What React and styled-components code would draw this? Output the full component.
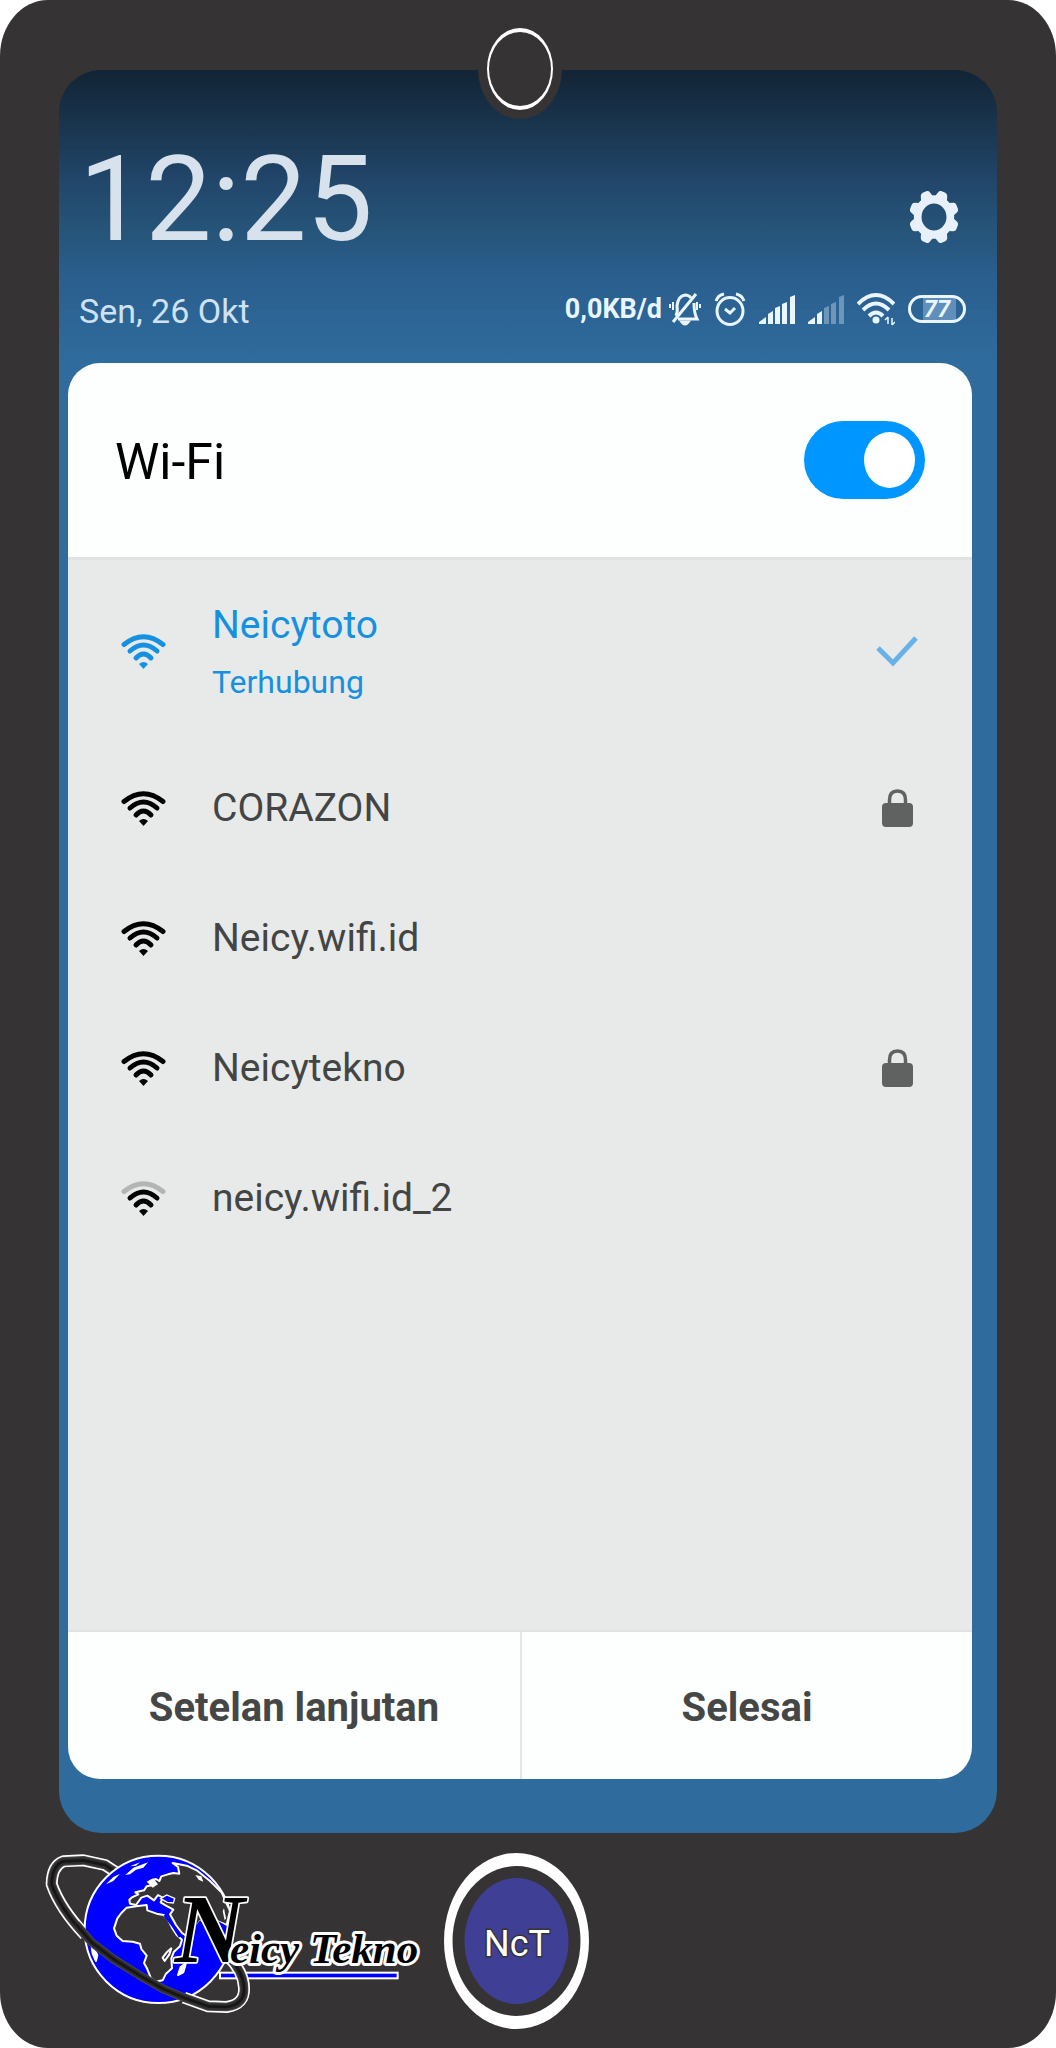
import React, { useState } from 'react';
import styled, { createGlobalStyle } from 'styled-components';

const GlobalStyle = createGlobalStyle`
  * {
    box-sizing: border-box;
  }
  body {
    margin: 0;
    background-color: #fff;
    font-family: Roboto, 'Liberation Sans', sans-serif;
  }
`;
const Device = styled.main`
  display: flex;
  flex-direction: column;
  min-height: 100vh;
  padding: 70px 59px 0;
  background-color: #363334;
  border-radius: 48px / 56px;
`;
const Screen = styled.div`
  display: flex;
  flex: 1;
  flex-direction: column;
  padding: 0 25px 54px 9px;
  border-radius: 42px;
  background: #2f6b9c
    linear-gradient(
      #122435 0,
      #1a3650 60px,
      #21466a 110px,
      #265479 160px,
      #2a5f8f 210px,
      #2f6b9c 290px
    )
    no-repeat;
`;
const Content = styled.div`
  position: relative;
  display: flex;
  flex: 1;
  flex-direction: column;
`;
const Camera = styled.svg`
  position: absolute;
  top: -51px;
  left: 50%;
  width: 84px;
  height: 100px;
  transform: translateX(-50%);
`;
const StatusArea = styled.header`
  display: flex;
  flex-direction: column;
  justify-content: space-between;
  height: 293px;
  padding: 58px 6px 32px 11px;
`;
const StatusLine = styled.div`
  display: flex;
  align-items: center;
  justify-content: space-between;
`;
const Clock = styled.time`
  font-size: 118px;
  line-height: 144px;
  color: #d7e2ec;
`;
const DateText = styled.time`
  font-size: 34px;
  line-height: 40px;
  color: #cfe2f2;
`;
const IconButton = styled.button`
  display: flex;
  margin: 34px 8px 0 0;
  padding: 0;
  border: 0;
  background: none;
  color: #e8f1fb;
`;
const StatusIcons = styled.div`
  display: flex;
  align-items: center;
  gap: 13px;
  margin-bottom: 4px;
  color: #e9f6ff;
`;
const Speed = styled.span`
  margin-right: -6px;
  font-size: 27px;
  font-weight: 700;
`;
const Battery = styled.span`
  display: flex;
  align-items: center;
  justify-content: center;
  width: 58px;
  height: 28px;
  border: 3px solid #e9f6ff;
  border-radius: 14px;
  background: linear-gradient(90deg, transparent 24%, #5f8fba 24%, #5f8fba 86%, transparent 86%);
  font-size: 24px;
  font-weight: 700;
  font-style: italic;
`;
const Card = styled.section`
  display: flex;
  flex: 1;
  flex-direction: column;
  overflow: hidden;
  border-radius: 32px;
  background-color: #fdfefe;
`;
const CardHeader = styled.label`
  display: flex;
  align-items: center;
  justify-content: space-between;
  height: 194px;
  padding: 0 47px;
`;
const Title = styled.span`
  padding-top: 4px;
  font-size: 50px;
  line-height: 60px;
  color: #000;
`;
const Switch = styled.input`
  appearance: none;
  display: flex;
  align-items: center;
  width: 121px;
  height: 78px;
  margin: 0;
  padding: 0 10px;
  border-radius: 39px;
  background-color: ${({ checked }) => (checked ? '#0096ff' : '#c8c8c8')};
  justify-content: ${({ checked }) => (checked ? 'flex-end' : 'flex-start')};

  &::before {
    content: '';
    width: 51px;
    height: 56px;
    border-radius: 50%;
    background-color: #fff;
  }
`;
const List = styled.ul`
  flex: 1;
  margin: 0;
  padding: 0;
  list-style: none;
  border-top: 3px solid #e0e2e1;
  border-bottom: 2px solid #dfe2e1;
  background-color: #e8eae9;
`;
const Row = styled.li`
  display: flex;
  align-items: center;
  height: ${({ $tall }) => ($tall ? '183px' : '130px')};
  padding: 0 53px;
  color: ${({ $tall }) => ($tall ? '#1591e0' : '#000')};
`;
const Names = styled.div`
  display: flex;
  flex: 1;
  flex-direction: column;
  gap: 13px;
  margin-left: 46px;
`;
const Name = styled.span`
  font-size: 39px;
  line-height: 48px;
  color: ${({ $active }) => ($active ? '#1591e0' : '#434545')};
`;
const State = styled.span`
  font-size: 32px;
  line-height: 40px;
`;
const Mark = styled.span`
  display: flex;
  justify-content: center;
  width: 44px;
`;
const Actions = styled.footer`
  display: grid;
  grid-template-columns: 1fr 1fr;
  height: 147px;
`;
const Action = styled.button`
  border: 0;
  padding: 4px 0 0;
  background: none;
  font-family: inherit;
  font-size: 40px;
  font-weight: 700;
  color: #454747;

  & + & {
    border-left: 2px solid #e4e6e5;
  }
`;
const Chin = styled.div`
  display: flex;
  align-items: center;
  height: 215px;
`;
const Logo = styled.svg`
  width: 384px;
  height: 200px;
  margin-left: -14px;
`;
const LogoText = styled.text`
  font-family: 'Liberation Serif', serif;
  font-style: italic;
  font-weight: 700;
  fill: #000;
  stroke: #fff;
  stroke-linejoin: round;
  paint-order: stroke;
`;
const HomeButton = styled.button`
  display: flex;
  margin-left: 15px;
  padding: 0;
  border: 0;
  background: none;
`;

const networks = [
  { name: 'Neicytoto', state: 'Terhubung', connected: true },
  { name: 'CORAZON', locked: true },
  { name: 'Neicy.wifi.id' },
  { name: 'Neicytekno', locked: true },
  { name: 'neicy.wifi.id_2', weak: true },
];

const gearTeeth = [22.5, 67.5, 112.5, 157.5, 202.5, 247.5, 292.5, 337.5];

function GearIcon() {
  return (
    <svg width="48" height="52" viewBox="-25 -25 50 50" preserveAspectRatio="none" fill="currentColor">
      <circle r="17" fill="none" stroke="currentColor" strokeWidth="8" />
      {gearTeeth.map(angle => (
        <path
          key={angle}
          d="M-7 -18L-5 -24Q-4 -26 -2 -26H2Q4 -26 5 -24L7 -18Z"
          transform={`rotate(${angle})`}
        />
      ))}
    </svg>
  );
}

function MutedIcon() {
  return (
    <svg width="32" height="34" viewBox="0 0 32 34" fill="none" stroke="currentColor" strokeWidth="3">
      <path d="M7 24Q9 20 8 14Q9 4 16 3Q20 3 22 6M25 11Q25 21 28 27H9" />
      <path d="M27 2L4 30" />
      <path d="M13 30Q16 34 19 30Z" fill="currentColor" />
      <path d="M4 10V18M1 12V16M28 10V18M31 12V16" strokeWidth="2" />
    </svg>
  );
}

function AlarmIcon() {
  return (
    <svg width="32" height="34" viewBox="0 0 32 34" fill="none" stroke="currentColor" strokeWidth="3">
      <ellipse cx="16" cy="19" rx="13" ry="13.5" />
      <path d="M2 9Q4 3 10 2M30 9Q28 3 22 2M11 17L16 21L21 16" />
    </svg>
  );
}

function SignalIcon({ level }) {
  const bars = [
    'M0 29V27L7 22V29Z',
    'M9 29V19L14 16V29Z',
    'M16 29V13L21 11V29Z',
    'M23 29V9L28 7V29Z',
    'M31 29V2L36 0V29Z',
  ];
  return (
    <svg width="36" height="29" viewBox="0 0 36 29" fill="currentColor">
      {bars.map((bar, index) => (
        <path key={bar} d={bar} opacity={index < level ? 1 : 0.35} />
      ))}
    </svg>
  );
}

function WifiStatusIcon() {
  return (
    <svg width="38" height="34" viewBox="0 0 38 34" fill="none" stroke="currentColor" strokeWidth="4">
      <path d="M1 12Q19 -6 37 12M6 18Q19 5 32 18M12 24Q19 17 26 24" />
      <circle cx="19" cy="28" r="3.5" fill="currentColor" stroke="none" />
      <path d="M31 25V32M31 25L28 28M35 26V33M35 33L38 30" strokeWidth="1.5" />
    </svg>
  );
}

function WifiIcon({ weak }) {
  return (
    <svg
      width="45"
      height="35"
      viewBox="0 0 45 35"
      fill="none"
      stroke="currentColor"
      strokeWidth="5"
      strokeLinecap="round"
    >
      <path d="M3 10.5Q22.5 -5 42 10.5" stroke={weak ? '#b3b5b4' : 'currentColor'} />
      <path d="M9 17Q22.5 5 36 17M15 24Q22.5 16 30 24" />
      <path d="M18 30Q22.5 26 27 30L22.5 35Z" fill="currentColor" stroke="none" />
    </svg>
  );
}

function CheckIcon() {
  return (
    <svg width="42" height="34" viewBox="0 0 42 34" fill="none" stroke="#68b2ea" strokeWidth="5">
      <path d="M2 13L17 28L40 3" />
    </svg>
  );
}

function LockIcon() {
  return (
    <svg width="31" height="38" viewBox="0 0 31 38">
      <path d="M7.5 17V11Q7.5 2 15.5 2T23.5 11V17" fill="none" stroke="#606161" strokeWidth="3.5" />
      <rect y="14" width="31" height="24" rx="4" fill="#606161" />
    </svg>
  );
}

function Orbit({ d, halo }) {
  return (
    <g fill="none" strokeLinejoin="round">
      <path d={halo} stroke="#fff" strokeWidth="36" />
      <path d={d} stroke="#4a4849" strokeWidth="26" />
      <path d={d} stroke="#2f2d2e" strokeWidth="20" />
      <path d={d} stroke="#161616" strokeWidth="8" />
    </g>
  );
}

function BrandLogo() {
  return (
    <Logo viewBox="45 30 1152 600" role="img" aria-label="Neicy Tekno">
      <defs>
        <clipPath id="globe">
          <circle cx="385" cy="295" r="220" />
        </clipPath>
      </defs>
      {/* far side of the orbit */}
      <Orbit
        d="M260 125L225 102L160 88L100 91Q66 104 65 160Q90 232 165 312"
        halo="M260 125L225 102L160 88L100 91Q66 104 65 160Q90 232 165 312"
      />
      <circle cx="385" cy="295" r="221" fill="#0000fe" stroke="#fff" strokeWidth="6" />
      <g clipPath="url(#globe)" fill="#363334" stroke="#fff" strokeWidth="6" strokeLinejoin="round">
        <path d="M262 262L274 246L290 230L318 226L350 222L352 238L380 248L401 252L412 262L426 290L440 312L456 326L450 346L432 362L424 382L426 412L408 428L398 448L376 452L362 440L350 410L342 396L350 374L334 354L330 338L308 332L278 330L260 314L252 292Z" />
        <path d="M298 206L306 199L325 190L316 184L342 178L350 166L370 162L360 150L378 144L388 150L394 136L414 130L430 126L448 128L444 108L428 96L470 104L500 118L540 150L575 185L600 240L590 282L560 270L535 290L510 270L492 298L474 318L456 306L438 282L420 250L430 236L408 224L392 214L398 200L384 192L372 208L352 194L334 200L318 222L300 218Z" />
        <path d="M398 380L410 364L424 352L418 370L404 390Z" />
        <path d="M444 432L452 408L468 396L460 424Z" fill="#fff" />
        <path d="M184 340L202 372L198 390L188 368Z" fill="#fff" />
        {/* ocean east of Africa */}
        <path d="M484 300L510 268L535 290L560 268L600 290L600 400L470 400Z" fill="#0000fe" stroke="none" />
      </g>
      <g fill="#fff">
        <path d="M286 132L310 110L354 94L340 110L318 116L300 130Z" />
        <path d="M228 160L250 138L270 128L250 150Z" />
        <path d="M300 106L330 94L318 104Z" />
        <path d="M350 152L370 142L384 160L368 170Z" />
        <path d="M496 132L514 136L520 152L506 146Z" />
        <path d="M582 232L588 262L584 268L578 240Z" />
      </g>
      <path
        d="M392 203L410 192L434 202L430 216L412 214Z"
        fill="#0000fe"
        stroke="#fff"
        strokeWidth="4"
      />
      <path d="M404 252L430 286L450 318" fill="none" stroke="#0000fe" strokeWidth="8" />
      <rect x="570" y="425" width="533" height="17" fill="#0000fe" stroke="#fff" strokeWidth="6" />
      {/* near side of the orbit */}
      <Orbit
        d="M138 280L185 334L250 384L330 434L400 474L462 500L535 526L590 528Q645 520 642 470Q640 420 592 374"
        halo="M462 500L535 526L590 528Q645 520 642 470Q640 420 592 374"
      />
      <LogoText x="434" y="392" fontSize="290" strokeWidth="10">N</LogoText>
      <LogoText x="600" y="396" fontSize="129" strokeWidth="18">eicy Tekno</LogoText>
    </Logo>
  );
}

function App() {
  const [wifiOn, setWifiOn] = useState(true);

  return (
    <>
      <GlobalStyle />
      <Device>
        <Screen>
          <Content>
            <Camera viewBox="0 0 84 100" aria-hidden="true">
              <ellipse cx="42" cy="50" rx="42" ry="50" fill="#363334" />
              <ellipse cx="42" cy="50" rx="33" ry="41" fill="#fff" />
              <ellipse cx="42" cy="50" rx="31" ry="37" fill="#363334" />
            </Camera>
            <StatusArea>
              <StatusLine>
                <Clock>12:25</Clock>
                <IconButton type="button" aria-label="Setelan">
                  <GearIcon />
                </IconButton>
              </StatusLine>
              <StatusLine>
                <DateText>Sen, 26 Okt</DateText>
                <StatusIcons>
                  <Speed>0,0KB/d</Speed>
                  <MutedIcon />
                  <AlarmIcon />
                  <SignalIcon level={5} />
                  <SignalIcon level={2} />
                  <WifiStatusIcon />
                  <Battery>77</Battery>
                </StatusIcons>
              </StatusLine>
            </StatusArea>
            <Card>
              <CardHeader>
                <Title>Wi-Fi</Title>
                <Switch
                  type="checkbox"
                  role="switch"
                  checked={wifiOn}
                  onChange={event => setWifiOn(event.target.checked)}
                />
              </CardHeader>
              <List>
                {networks.map(({ name, state, connected, locked, weak }) => (
                  <Row key={name} $tall={connected}>
                    <WifiIcon weak={weak} />
                    <Names>
                      <Name $active={connected}>{name}</Name>
                      {state && <State>{state}</State>}
                    </Names>
                    <Mark>
                      {connected && <CheckIcon />}
                      {locked && <LockIcon />}
                    </Mark>
                  </Row>
                ))}
              </List>
              <Actions>
                <Action type="button">Setelan lanjutan</Action>
                <Action type="button">Selesai</Action>
              </Actions>
            </Card>
          </Content>
        </Screen>
        <Chin>
          <BrandLogo />
          <HomeButton type="button" aria-label="NcT">
            <svg width="145" height="176" viewBox="0 0 145 176">
              <ellipse cx="72.5" cy="88" rx="72.5" ry="88" fill="#fff" />
              <ellipse cx="72.5" cy="88" rx="64" ry="75" fill="#363334" />
              <ellipse cx="72.5" cy="88" rx="52" ry="63" fill="#3f4095" />
              <text
                x="73"
                y="103"
                textAnchor="middle"
                fontFamily="Roboto, sans-serif"
                fontSize="36"
                fill="#fff"
                stroke="#363334"
                strokeWidth="3"
                paintOrder="stroke"
              >
                NcT
              </text>
            </svg>
          </HomeButton>
        </Chin>
      </Device>
    </>
  );
}

export default App;
